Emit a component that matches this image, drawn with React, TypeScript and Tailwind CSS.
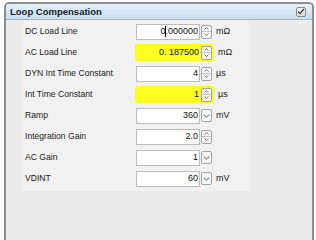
import React from 'react'

type Row = {
  label: string
  value: string
  unit?: string
  control: 'spin' | 'drop'
  highlight?: boolean
  caret?: boolean
}

const rows: Row[] = [
  { label: 'DC Load Line', value: '0.000000', unit: 'mΩ', control: 'spin', caret: true },
  { label: 'AC Load Line', value: '0. 187500', unit: 'mΩ', control: 'spin', highlight: true },
  { label: 'DYN Int Time Constant', value: '4', unit: 'µs', control: 'spin' },
  { label: 'Int Time Constant', value: '1', unit: 'µs', control: 'spin', highlight: true },
  { label: 'Ramp', value: '360', unit: 'mV', control: 'drop' },
  { label: 'Integration Gain', value: '2.0', control: 'spin' },
  { label: 'AC Gain', value: '1', control: 'drop' },
  { label: 'VDINT', value: '60', unit: 'mV', control: 'drop' }
]

const Spinner = () => (
  <div className="flex flex-col w-[11px] h-[14px] border border-[#a3a3a3] rounded-[2px] bg-[#f7f7f7] overflow-hidden">
    <div className="flex-1 flex items-center justify-center border-b border-[#c4c4c4]">
      <svg width="5" height="3" viewBox="0 0 5 3">
        <path d="M0.5 2.5 L2.5 0.5 L4.5 2.5" fill="none" stroke="#6b6b6b" strokeWidth="0.9" />
      </svg>
    </div>
    <div className="flex-1 flex items-center justify-center">
      <svg width="5" height="3" viewBox="0 0 5 3">
        <path d="M0.5 0.5 L2.5 2.5 L4.5 0.5" fill="none" stroke="#6b6b6b" strokeWidth="0.9" />
      </svg>
    </div>
  </div>
)

const Dropdown = () => (
  <div className="flex items-center justify-center w-[11px] h-[13px] border border-[#a3a3a3] rounded-[2px] bg-[#f7f7f7]">
    <svg width="7" height="4" viewBox="0 0 7 4">
      <path d="M0.8 0.6 L3.5 3.2 L6.2 0.6" fill="none" stroke="#555" strokeWidth="1" />
    </svg>
  </div>
)

export default function App() {
  return (
    <div className="w-[316px] h-[240px] bg-white pt-[2px] pl-[4px] font-['Liberation_Sans',Arial,sans-serif]">
      <div className="w-[310px] h-[238px] border-2 border-b-0 border-[#8f8f8f] rounded-t-[5px] bg-[#ececec] flex flex-col overflow-hidden">
        {/* header */}
        <div className="h-[16px] flex items-center justify-between pl-[4px] pr-[6px] bg-gradient-to-b from-[#e6f0fa] to-[#cadcee] border-b border-[#a7b3bf]">
          <span className="text-[9.5px] font-bold text-[#141c28] leading-none">Loop Compensation</span>
          <div className="w-[10px] h-[10px] border border-[#8a8a8a] rounded-[2px] bg-gradient-to-b from-[#f4f4f4] to-[#d9d9d9] flex items-center justify-center">
            <svg width="8" height="7" viewBox="0 0 8 7">
              <path d="M1 3.6 L3 5.6 L7 0.8" fill="none" stroke="#333" strokeWidth="1.3" />
            </svg>
          </div>
        </div>

        {/* body */}
        <div className="pl-[16px] pt-[1px]">
          <div className="w-[228px] bg-[#f1f1f1] pb-[2px]">
            {rows.map((r) => (
              <div key={r.label} className="h-[21px] flex items-center">
                <div className="w-[114px] pl-[3px] text-[8.6px] text-[#1a1a1a]">{r.label}</div>
                <div
                  className={
                    r.highlight
                      ? 'flex items-center gap-[1px] h-[17px] pr-[2px] bg-[#ffff22] rounded-[3px] -ml-[1px] pl-[1px]'
                      : 'flex items-center gap-[1px] h-[17px]'
                  }
                >
                  <div
                    className={
                      r.highlight
                        ? 'w-[64px] h-[16px] flex items-center justify-end pr-[1px] text-[9px] text-[#111]'
                        : 'w-[64px] h-[16px] flex items-center justify-end pr-[1px] text-[9px] text-[#111] bg-white border border-[#bdbdbd]'
                    }
                  >
                    {r.caret ? (
                      <span>
                        0
                        <span className="relative">
                          .
                          <span className="absolute left-[0px] top-[0px] w-px h-[11px] bg-black" />
                        </span>
                        000000
                      </span>
                    ) : (
                      r.value
                    )}
                  </div>
                  {r.control === 'spin' ? <Spinner /> : <Dropdown />}
                </div>
                {r.unit && <span className="ml-[4px] text-[9px] text-[#1a1a1a]">{r.unit}</span>}
              </div>
            ))}
          </div>
        </div>
      </div>
    </div>
  )
}
